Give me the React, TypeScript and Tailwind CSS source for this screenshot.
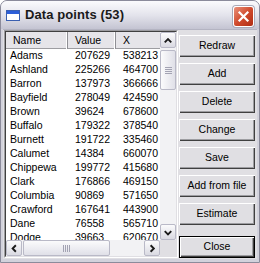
import React from "react";

const rows: [string, string, string][] = [
  ["Adams", "207629", "538213"],
  ["Ashland", "225266", "464700"],
  ["Barron", "137973", "366666"],
  ["Bayfield", "278049", "424590"],
  ["Brown", "39624", "678600"],
  ["Buffalo", "179322", "378540"],
  ["Burnett", "191722", "335460"],
  ["Calumet", "14384", "660070"],
  ["Chippewa", "199772", "415680"],
  ["Clark", "176866", "469150"],
  ["Columbia", "90869", "571650"],
  ["Crawford", "167641", "443900"],
  ["Dane", "76558", "565710"],
  ["Dodge", "39663", "620670"],
  ["Door", "27815", "740110"],
];

const buttons = ["Redraw", "Add", "Delete", "Change", "Save", "Add from file", "Estimate"];

function Chevron({ dir }: { dir: "up" | "down" | "left" | "right" }) {
  const d = {
    up: "M4 9.5 L7.5 6 L11 9.5",
    down: "M4 6 L7.5 9.5 L11 6",
    left: "M9.5 4 L6 7.5 L9.5 11",
    right: "M6 4 L9.5 7.5 L6 11",
  }[dir];
  return (
    <svg width="15" height="15" viewBox="0 0 15 15">
      <path d={d} fill="none" stroke="#1a1a1a" strokeWidth="2" />
    </svg>
  );
}

function ScrollButton({ dir }: { dir: "up" | "down" | "left" | "right" }) {
  return (
    <div className="w-[16px] h-[16px] flex items-center justify-center rounded-[2px] border border-[#b9b9c7] bg-gradient-to-b from-[#fbfbfc] to-[#dadae2]">
      <Chevron dir={dir} />
    </div>
  );
}

function WinButton({ label, isDefault }: { label: string; isDefault?: boolean }) {
  return (
    <div
      className={
        "h-[22px] flex items-center justify-center bg-[#e0dfe3] text-[10.5px] text-black " +
        (isDefault
          ? "border border-black shadow-[inset_1px_1px_#ffffff,inset_-1px_-1px_#404040,inset_-2px_-2px_#9d9da1]"
          : "shadow-[inset_1px_1px_#ffffff,inset_-1px_-1px_#404040,inset_-2px_-2px_#9d9da1]")
      }
    >
      {label}
    </div>
  );
}

export default function App() {
  return (
    <div
      className="w-[260px] h-[263px] flex flex-col bg-[#d2d2dc] border border-[#8b8b9b] rounded-t-[7px] overflow-hidden"
      style={{ fontFamily: '"Liberation Sans", Arial, sans-serif' }}
    >
      {/* title bar */}
      <div className="h-[28px] shrink-0 flex items-center pl-[5px] pr-[5px] bg-gradient-to-b from-[#fbfbfd] via-[#e4e4ec] to-[#c4c4d2]">
        <div className="w-[14px] h-[11px] border border-[#3a5fb0] bg-white flex flex-col">
          <div className="h-[3px] bg-[#2c5ed8]" />
        </div>
        <span className="ml-[5px] text-[13px] font-bold text-[#1a1a1a] tracking-[0.1px]">Data points (53)</span>
        <div className="ml-auto w-[21px] h-[21px] mt-[3px] rounded-[3px] border border-white bg-gradient-to-br from-[#e8907a] via-[#d04a2c] to-[#b02c14] flex items-center justify-center shadow-[0_0_0_1px_#a9a9b8]">
          <svg width="13" height="13" viewBox="0 0 13 13">
            <path d="M2.5 2.5 L10.5 10.5 M10.5 2.5 L2.5 10.5" stroke="white" strokeWidth="2.2" strokeLinecap="square" />
          </svg>
        </div>
      </div>

      {/* client */}
      <div className="flex-1 flex mx-[2px] mb-[3px] bg-[#e0dfe3] border-t border-[#b4b4c2]">
        {/* list view */}
        <div className="ml-[1px] w-[174px] h-[228px] flex flex-col border-t border-l border-[#9d9da1] border-r border-b border-r-white border-b-white">
          <div className="flex-1 flex flex-col border border-[#404040] border-r-[#e0dfe3] border-b-[#e0dfe3] bg-white min-h-0">
            <div className="flex flex-1 min-h-0">
              <div className="w-[154px] flex flex-col overflow-hidden">
                {/* header */}
                <div className="h-[17px] shrink-0 flex text-[10.5px] text-black bg-[#e6e5e9] shadow-[inset_0_-1px_#9d9da1]">
                  <div className="w-[62px] shrink-0 pl-[7px] flex items-center shadow-[inset_-1px_0_#8f8f94,inset_-2px_0_#ffffff]">Name</div>
                  <div className="w-[48px] shrink-0 pl-[7px] flex items-center shadow-[inset_-1px_0_#8f8f94,inset_-2px_0_#ffffff]">Value</div>
                  <div className="w-[60px] shrink-0 pl-[7px] flex items-center">X</div>
                </div>
                {/* rows */}
                <div className="flex-1 overflow-hidden">
                  {rows.map(([n, v, x]) => (
                    <div key={n} className="h-[14px] flex items-center text-[10.5px] text-black whitespace-nowrap">
                      <div className="w-[62px] shrink-0 pl-[4px]">{n}</div>
                      <div className="w-[48px] shrink-0 pl-[7px]">{v}</div>
                      <div className="w-[60px] shrink-0 pl-[7px]">{x}</div>
                    </div>
                  ))}
                </div>
              </div>
              {/* vertical scrollbar */}
              <div className="w-[16px] flex flex-col bg-[#f2f2f4]">
                <ScrollButton dir="up" />
                <div className="flex-1 relative">
                  <div className="absolute left-0 top-[2px] w-[16px] h-[40px] rounded-[2px] border border-[#b9b9c7] bg-gradient-to-r from-[#fbfbfc] to-[#e0e0e8] flex flex-col items-center justify-center gap-[1px]">
                    <div className="w-[7px] h-[1px] bg-[#a3a3b3]" />
                    <div className="w-[7px] h-[1px] bg-[#a3a3b3]" />
                    <div className="w-[7px] h-[1px] bg-[#a3a3b3]" />
                    <div className="w-[7px] h-[1px] bg-[#a3a3b3]" />
                  </div>
                </div>
                <ScrollButton dir="down" />
              </div>
            </div>
            {/* horizontal scrollbar */}
            <div className="h-[16px] shrink-0 flex">
              <div className="w-[154px] flex bg-[#f2f2f4]">
                <ScrollButton dir="left" />
                <div className="flex-1 relative">
                  <div className="absolute top-0 left-[1px] h-[16px] w-[87px] rounded-[2px] border border-[#b9b9c7] bg-gradient-to-b from-[#fbfbfc] to-[#e0e0e8] flex items-center justify-center gap-[1px]">
                    <div className="w-[1px] h-[7px] bg-[#a3a3b3]" />
                    <div className="w-[1px] h-[7px] bg-[#a3a3b3]" />
                    <div className="w-[1px] h-[7px] bg-[#a3a3b3]" />
                    <div className="w-[1px] h-[7px] bg-[#a3a3b3]" />
                  </div>
                </div>
                <ScrollButton dir="right" />
              </div>
              <div className="w-[16px] bg-[#e0dfe3]" />
            </div>
          </div>
        </div>

        {/* buttons */}
        <div className="ml-[1px] w-[76px] pt-[5px] pb-[1px] flex flex-col gap-[6px]">
          {buttons.map((b) => (
            <WinButton key={b} label={b} />
          ))}
          <div className="mt-auto">
            <WinButton label="Close" isDefault />
          </div>
        </div>
      </div>
    </div>
  );
}
